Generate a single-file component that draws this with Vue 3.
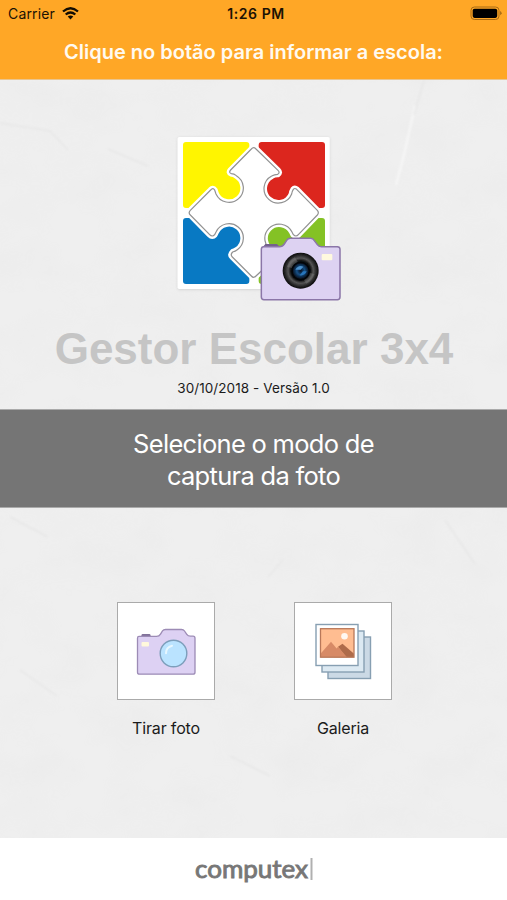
<script setup>
const title = 'Clique no botão para informar a escola:'
const starPath =
  'M244 57 Q251 49 258 57 L324 121 Q331 128 323 133 Q313 133 305 138 A43 43 0 1 0 365 192 Q366 184 370 178 Q374 173 380 178 L442 241 Q448 248 442 255 L385 314 Q378 322 370 314 L366 306 A43 43 0 1 0 309 364 Q318 365 322 370 Q326 375 319 381 L258 438 Q251 446 244 438 L187 381 Q180 374 188 366 Q196 364 202 359 A43 43 0 1 0 138 306 L134 314 Q127 322 119 314 L61 255 Q54 248 61 241 L122 180 Q129 172 134 180 Q136 186 138 192 A43 43 0 1 0 199 137 Q192 131 184 131 Q175 128 182 120 Z'
</script>

<template>
  <main class="screen">
    <header class="top">
      <div class="status">
        <div class="carrier">
          <span>Carrier</span>
          <svg width="17" height="13" viewBox="0 0 17 13">
            <g fill="none" stroke="#130d02" stroke-width="2.3">
              <path d="M1 4.5 Q8.5 -2 16 4.5" />
              <path d="M3.7 7.5 Q8.5 3.4 13.3 7.5" />
            </g>
            <path d="M5.7 9.6 Q8.5 7.2 11.3 9.6 L8.5 12.4Z" fill="#130d02" />
          </svg>
        </div>
        <span class="time">1:26 PM</span>
        <svg class="battery" width="32" height="15" viewBox="0 0 32 15">
          <rect x="1" y="1" width="28" height="12.5" rx="3.4" fill="none" stroke="#a96b13" stroke-width="1" />
          <rect x="2.7" y="2.7" width="24.5" height="9.2" rx="1.8" fill="#000" />
          <path d="M30.3 5.1 Q32.7 7.2 30.3 9.3Z" fill="#8a5710" />
        </svg>
      </div>
      <h1>{{ title }}</h1>
    </header>

    <section class="paper">
      <svg class="texture" viewBox="0 0 507 758" preserveAspectRatio="none">
        <defs>
          <filter id="grain" x="0" y="0" width="100%" height="100%">
            <feTurbulence type="fractalNoise" baseFrequency="0.018 0.024" numOctaves="4" seed="8" />
            <feColorMatrix values="0 0 0 0 .55  0 0 0 0 .55  0 0 0 0 .55  .5 0 0 0 -.19" />
          </filter>
          <filter id="soft"><feGaussianBlur stdDeviation="1.2" /></filter>
        </defs>
        <rect width="507" height="758" filter="url(#grain)" opacity=".22" />
        <g fill="none" stroke-width="1.6" filter="url(#soft)">
          <path d="M415 26 L404 75 L396 105" stroke="#f9f9f9" />
          <path d="M424 0 L414 35" stroke="#e7e7e7" />
          <path d="M0 43 L50 51 L68 70 M108 69 L148 86" stroke="#e7e7e7" />
          <path d="M10 437 L48 457 M445 440 L475 484 M230 676 L270 696" stroke="#e7e7e7" />
          <path d="M20 590 L57 616 M268 497 L283 480" stroke="#e8e8e8" />
        </g>
      </svg>

      <div class="brand">
        <svg class="logo" width="180" height="175" viewBox="0 0 540 525">
          <defs>
            <radialGradient id="lens">
              <stop offset="0" stop-color="#07121f" />
              <stop offset=".22" stop-color="#154f86" />
              <stop offset=".4" stop-color="#0a1d33" />
              <stop offset=".55" stop-color="#111" />
              <stop offset=".7" stop-color="#555" />
              <stop offset=".83" stop-color="#303030" />
              <stop offset="1" stop-color="#090909" />
            </radialGradient>
            <filter id="cardShadow" x="-10%" y="-10%" width="120%" height="120%">
              <feDropShadow dx="0" dy="2" stdDeviation="4" flood-opacity=".12" />
            </filter>
            <filter id="lensEdge"><feGaussianBlur stdDeviation="1.8" /></filter>
          </defs>
          <rect x="23" y="21" width="456" height="456" rx="5" fill="#fff" filter="url(#cardShadow)" />
          <rect x="39" y="36" width="199" height="198" rx="9" fill="#fff500" />
          <rect x="266" y="36" width="199" height="198" rx="9" fill="#dc261e" />
          <rect x="39" y="264" width="199" height="198" rx="9" fill="#0879c3" />
          <rect x="266" y="264" width="199" height="198" rx="9" fill="#84c225" />
          <path :d="starPath" fill="#fff" stroke="#fff" stroke-width="18" stroke-linejoin="round" />
          <path :d="starPath" fill="#fff" stroke="#929292" stroke-width="3.6" />
          <path d="M282 350 L287 344 H320 L326 350Z" fill="#75628d" stroke="#75628d" stroke-width="4" />
          <path d="M281 350 H328 Q338 350 343 342 L350 331 Q354 325 361 325 H422 Q429 325 433 332 L442 344 Q446 350 454 350 H502 Q510 350 510 358 V501 Q510 509 502 509 H282 Q274 509 274 501 V358 Q274 350 281 350Z" fill="#ddd2f2" stroke="#8b76a8" stroke-width="4.5" />
          <rect x="455" y="372" width="32" height="19" rx="3" fill="#fff9df" />
          <circle cx="392" cy="422" r="54" fill="url(#lens)" filter="url(#lensEdge)" />
          <path d="M351 410 Q357 390 375 382 L384 397 Q370 403 366 414Z" fill="#858585" opacity=".4" />
          <path d="M434 432 Q426 453 409 461 L400 446 Q415 440 419 429Z" fill="#929292" opacity=".3" />
          <circle cx="392" cy="423" r="26" fill="none" stroke="#020407" stroke-width="5" />
          <path d="M376 419 Q386 403 400 410 L392 419Z" fill="#4c91cc" />
          <path d="M389 436 Q405 438 410 424 L399 424Z" fill="#2875bb" />
        </svg>
        <h2>Gestor Escolar 3x4</h2>
        <p>30/10/2018 - Versão 1.0</p>
      </div>

      <div class="prompt">Selecione o modo de<br />captura da foto</div>

      <div class="actions">
        <button class="action">
          <span class="tile">
            <svg width="96" height="96" viewBox="0 0 96 96">
              <rect x="23.5" y="30" width="9" height="4" rx="1.2" fill="#81719a" />
              <path d="M21.5 33.2 H39 Q41.7 33.2 43 31 L45 27.7 Q46 26.3 48 26.3 H64 Q66 26.3 67 27.8 L69.3 31.2 Q70.5 33 73 33 H75.5 Q77.5 33 77.5 35 V69 Q77.5 71 75.5 71 H22 Q20 71 20 69 V35 Q20 33.2 21.5 33.2Z" fill="#ddd1f3" stroke="#9c8bb5" stroke-width="1.3" transform="translate(-.5 -.8)" />
              <rect x="23.5" y="38" width="7.5" height="4.5" rx="1" fill="#fff8dc" />
              <circle cx="55.5" cy="49.5" r="13.3" fill="#bae3ff" stroke="#7d9ebb" stroke-width="1.4" />
              <path d="M48 49.2 Q48 43.2 54 41.7" fill="none" stroke="#e7f7ff" stroke-width="2" stroke-linecap="round" />
            </svg>
          </span>
          <span>Tirar foto</span>
        </button>
        <button class="action">
          <span class="tile">
            <svg width="96" height="96" viewBox="0 0 96 96">
              <g stroke="#879fb2" stroke-width="1.4">
                <rect x="33" y="33" width="42.5" height="41.5" fill="#cbd9e5" />
                <rect x="27" y="27" width="42" height="41" fill="#dce9f2" />
                <rect x="21" y="20.5" width="42" height="41" fill="#fff" />
              </g>
              <g transform="translate(0 -.8)">
                <rect x="25.5" y="25.5" width="33.5" height="28.5" fill="#ffbd91" />
                <path d="M26 50 L36 38.5 L49 54 H26Z" fill="#d78a66" />
                <path d="M43 43.5 L47.5 40.5 L59 50.5 V54 H51Z" fill="#ae6b4a" />
                <path d="M43 43.5 L37 51 L39 54 H52Z" fill="#d78a66" />
                <rect x="25.5" y="25.5" width="33.5" height="28.5" fill="none" stroke="#b97859" stroke-width="1.3" />
                <circle cx="49.5" cy="33" r="3.3" fill="#fff8f2" />
              </g>
            </svg>
          </span>
          <span>Galeria</span>
        </button>
      </div>
    </section>

    <footer>
      <svg width="122" height="44" viewBox="0 0 122 44">
        <text x="2" y="31" textLength="113" lengthAdjust="spacingAndGlyphs">computex</text>
        <path d="M118.5 11 V33" stroke="#b0b0b0" stroke-width="2" />
      </svg>
    </footer>
  </main>
</template>

<style>
body { margin: 0; }
</style>

<style scoped>
.screen {
  display: flex;
  flex-direction: column;
  width: 507px;
  height: 900px;
  overflow: hidden;
  background: #efefef;
  color: #1b1b1b;
  font-family: Inter, "Liberation Sans", sans-serif;
}
.top {
  box-sizing: border-box;
  height: 80px;
  flex: none;
  background: #ffa726;
  border-bottom: 1px solid #eac58f;
}
.status {
  display: grid;
  grid-template-columns: 1fr auto 1fr;
  align-items: center;
  height: 27px;
  padding: 0 5px 0 8px;
  color: #1b1204;
  font-size: 14px;
  line-height: 27px;
}
.carrier { display: flex; align-items: center; gap: 7px; letter-spacing: .15px; }
.time { padding-left: 2px; font-weight: 600; letter-spacing: .6px; }
.battery { justify-self: end; }
h1 {
  margin: 11px 0 0;
  color: #fffaf0;
  font-size: 20px;
  line-height: 28px;
  font-weight: 600;
  text-align: center;
}
.paper {
  position: relative;
  flex: 1;
  min-height: 0;
  display: flex;
  flex-direction: column;
}
.texture { position: absolute; inset: 0; width: 100%; height: 100%; }
.brand {
  position: relative;
  display: flex;
  flex-direction: column;
  align-items: center;
  height: 329px;
}
.logo { flex: none; margin: 50px 0 0 13px; }
h2 {
  margin: 19px 0 0 1px;
  color: #c5c5c5;
  font: bold 44px/50px "Liberation Sans", sans-serif;
  white-space: nowrap;
}
.brand p { margin: 5px 0 0; font-size: 13.5px; line-height: 18px; letter-spacing: .08px; }
.prompt {
  position: relative;
  box-sizing: border-box;
  height: 99px;
  padding-top: 18px;
  background: #757575;
  border-top: 1px solid #aaa;
  border-bottom: 1px solid #aaa;
  color: #fff;
  font-size: 25.5px;
  line-height: 32px;
  letter-spacing: -.7px;
  text-align: center;
}
.actions {
  position: relative;
  display: flex;
  justify-content: center;
  gap: 79px;
  padding: 94px 0 0 2px;
}
.action {
  display: flex;
  flex-direction: column;
  align-items: center;
  gap: 18px;
  width: 98px;
  padding: 0;
  border: 0;
  background: none;
  color: #1b1b1b;
  font: 16px/20px Inter, "Liberation Sans", sans-serif;
  letter-spacing: -.15px;
  white-space: nowrap;
}
.tile {
  box-sizing: border-box;
  width: 98px;
  height: 98px;
  border: 1px solid #aaa;
  background: #fff;
}
.tile svg { display: block; transform: translateY(1px); }
footer {
  display: flex;
  justify-content: center;
  align-items: center;
  flex: none;
  height: 62px;
  background: #fff;
}
footer text {
  fill: #777;
  stroke: #777;
  stroke-width: .9px;
  font: 25px Lato, sans-serif;
}
</style>
